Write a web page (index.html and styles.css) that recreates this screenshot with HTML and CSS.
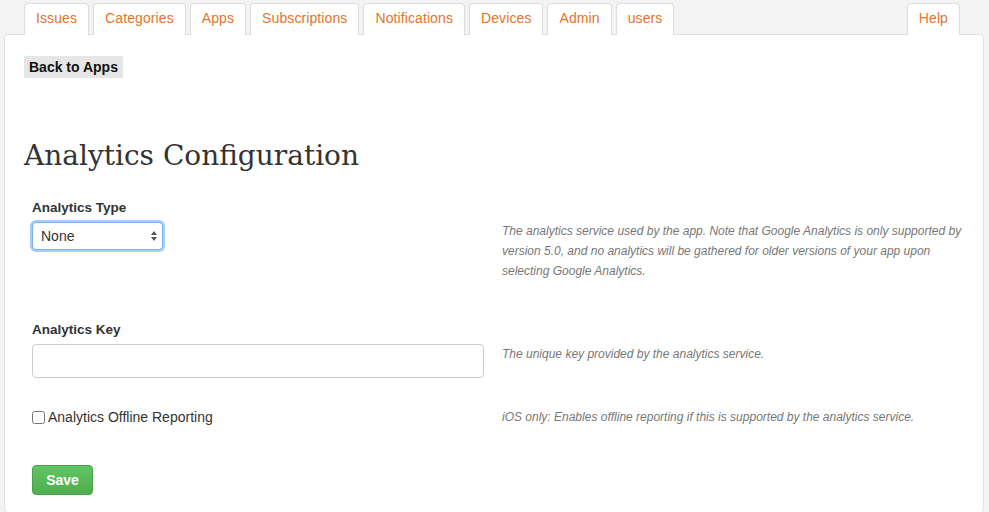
FILE: index.html
```html
<!DOCTYPE html>
<html lang="en">
<head>
  <meta charset="UTF-8" />
  <title>Analytics Configuration</title>
  <link rel="stylesheet" href="styles.css">
</head>
<body>

  <div class="tabs">
    <a href="#" class="tab">Issues</a>
    <a href="#" class="tab">Categories</a>
    <a href="#" class="tab">Apps</a>
    <a href="#" class="tab">Subscriptions</a>
    <a href="#" class="tab">Notifications</a>
    <a href="#" class="tab">Devices</a>
    <a href="#" class="tab">Admin</a>
    <a href="#" class="tab">users</a>
    <a href="#" class="tab help">Help</a>
  </div>

  <div class="panel">

    <a href="#" class="back">Back to Apps</a>

    <h1>Analytics Configuration</h1>

    <form class="form">

      <div class="row">
        <div class="field">
          <label class="label">Analytics Type</label>
          <div class="select-wrap">
            <select class="select">
              <option>None</option>
              <option>Google Analytics</option>
            </select>
            <svg class="arrows" width="8" height="12" viewBox="0 0 8 12">
              <path d="M4 1 L7 5 L1 5 Z" fill="#555"/>
              <path d="M4 11 L7 7 L1 7 Z" fill="#555"/>
            </svg>
          </div>
        </div>
        <p class="help-text">The analytics service used by the app. Note that Google Analytics is only supported by version 5.0, and no analytics will be gathered for older versions of your app upon selecting Google Analytics.</p>
      </div>

      <div class="row">
        <div class="field">
          <label class="label">Analytics Key</label>
          <input type="text" class="input" />
        </div>
        <p class="help-text key-help">The unique key provided by the analytics service.</p>
      </div>

      <div class="row check-row">
        <label class="check">
          <input type="checkbox" />
          <span>Analytics Offline Reporting</span>
        </label>
        <p class="help-text inline-help">iOS only: Enables offline reporting if this is supported by the analytics service.</p>
      </div>

      <button type="button" class="save">Save</button>

    </form>

  </div>

</body>
</html>
```

FILE: styles.css
```css
* {
  margin: 0;
  padding: 0;
  box-sizing: border-box;
}

body {
  font-family: 'Liberation Sans', Arial, sans-serif;
  font-size: 14px;
  color: #333;
  background-color: #f3f3f3;
}

.tabs {
  display: flex;
  gap: 4px;
  padding: 3px 29px 0 24px;
  height: 34px;
  position: relative;
  z-index: 1;
}

.tab {
  display: block;
  height: 32px;
  padding: 0 11px;
  line-height: 29px;
  letter-spacing: 0.1px;
  background-color: #fff;
  border: 1px solid #ddd;
  border-bottom: none;
  border-radius: 4px 4px 0 0;
  color: #e5742a;
  text-decoration: none;
}

.tab.help {
  margin-left: auto;
}

.panel {
  margin: 0 5px 0 4px;
  background-color: #fff;
  border: 1px solid #e2e2e2;
  border-radius: 4px;
  padding: 21px 19px 17px;
  min-height: 478px;
}

.back {
  display: inline-block;
  height: 22px;
  line-height: 22px;
  padding: 0 5px;
  background-color: #e6e6e6;
  color: #111;
  font-weight: bold;
  text-decoration: none;
}

h1 {
  font-family: 'DejaVu Serif', Georgia, serif;
  font-weight: normal;
  font-size: 28px;
  color: #333;
  margin-top: 58px;
  line-height: 40px;
}

.form {
  margin-top: 22px;
  padding-left: 8px;
}

.row {
  display: grid;
  grid-template-columns: 452px 1fr;
  column-gap: 18px;
  margin-bottom: 29px;
}

.label {
  display: block;
  font-weight: bold;
  font-size: 13.5px;
  line-height: 20px;
  margin-bottom: 4px;
}

.select-wrap {
  position: relative;
  width: 131px;
}

.select {
  -webkit-appearance: none;
  appearance: none;
  display: block;
  width: 131px;
  height: 28px;
  padding: 0 8px;
  font-family: 'Liberation Sans', Arial, sans-serif;
  font-size: 14px;
  color: #333;
  background-color: #fff;
  border: 1px solid #76aef0;
  border-radius: 4px;
  box-shadow: 0 0 0 2px #a9cdf7;
  outline: none;
}

.arrows {
  position: absolute;
  right: 5px;
  top: 8px;
}

.input {
  display: block;
  width: 452px;
  height: 34px;
  border: 1px solid #ccc;
  border-radius: 4px;
  background-color: #fff;
}

.help-text {
  font-size: 12px;
  font-style: italic;
  line-height: 20px;
  color: #777;
  padding-top: 23px;
  margin-bottom: 10px;
}

.help-text.key-help {
  padding-top: 24px;
}

.help-text.inline-help {
  padding-top: 0;
  margin-bottom: 0;
}

.check-row {
  margin-bottom: 38px;
}

.check {
  display: flex;
  align-items: center;
  gap: 3px;
  line-height: 20px;
}

.check input {
  width: 13px;
  height: 13px;
  margin: 0;
}

.save {
  display: block;
  width: 61px;
  height: 30px;
  border: 1px solid #48a048;
  border-radius: 4px;
  background: linear-gradient(#62c462, #4fae4f);
  color: #fff;
  font-family: 'Liberation Sans', Arial, sans-serif;
  font-size: 14px;
  font-weight: bold;
}
```
